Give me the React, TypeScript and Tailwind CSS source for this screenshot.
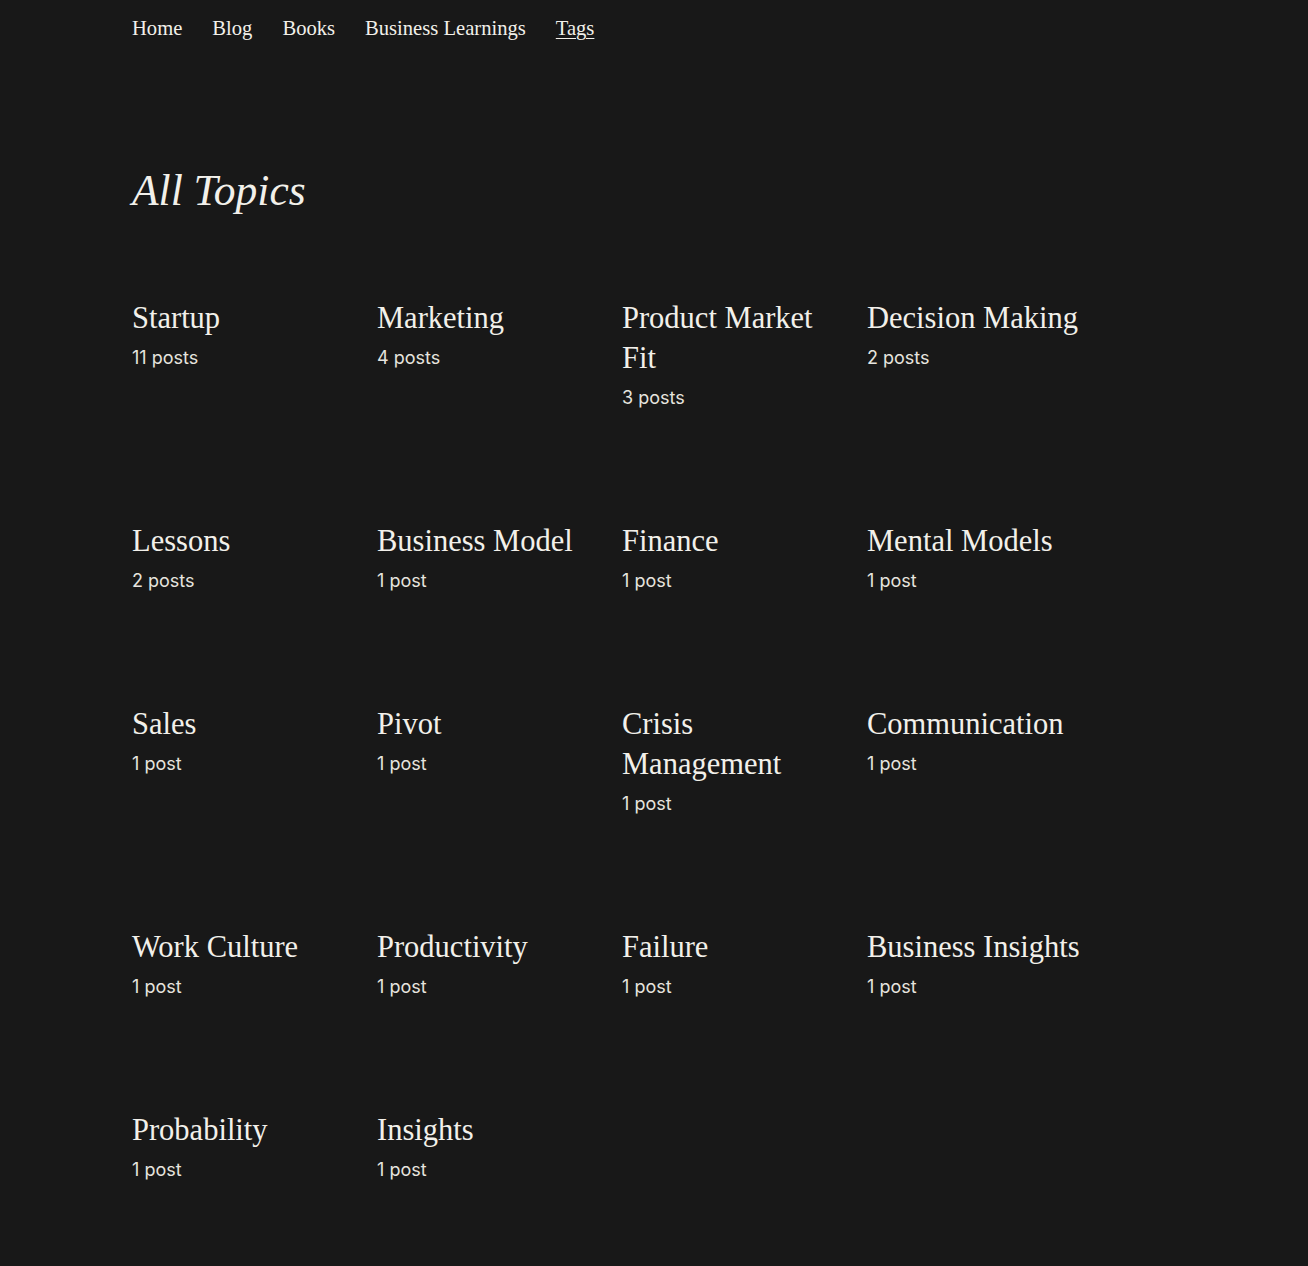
const navItems = ["Home", "Blog", "Books", "Business Learnings", "Tags"];

const topics: { name: string; count: number }[] = [
  { name: "Startup", count: 11 },
  { name: "Marketing", count: 4 },
  { name: "Product Market Fit", count: 3 },
  { name: "Decision Making", count: 2 },
  { name: "Lessons", count: 2 },
  { name: "Business Model", count: 1 },
  { name: "Finance", count: 1 },
  { name: "Mental Models", count: 1 },
  { name: "Sales", count: 1 },
  { name: "Pivot", count: 1 },
  { name: "Crisis Management", count: 1 },
  { name: "Communication", count: 1 },
  { name: "Work Culture", count: 1 },
  { name: "Productivity", count: 1 },
  { name: "Failure", count: 1 },
  { name: "Business Insights", count: 1 },
  { name: "Probability", count: 1 },
  { name: "Insights", count: 1 },
];

const serif = "font-['Liberation_Serif','DejaVu_Serif',serif]";

const App = () => {
  return (
    <div className="min-h-[1266px] w-full bg-[#181818] text-[#f2f0ea]">
      <div className="mx-auto w-[1044px]">
        {/* Nav */}
        <nav className={`flex h-14 items-center gap-[30px] text-[20.6px] ${serif}`}>
          {navItems.map((item) => (
            <a
              key={item}
              href="#"
              className={item === "Tags" ? "underline underline-offset-[3px] decoration-1" : ""}
            >
              {item}
            </a>
          ))}
        </nav>

        {/* Title */}
        <h1 className={`mt-[108px] text-[43.5px] italic leading-[53px] ${serif}`}>All Topics</h1>

        {/* Topics grid */}
        <div className="mt-[81px] grid grid-cols-[repeat(4,221px)] gap-x-6 gap-y-[111px] pb-[86px]">
          {topics.map((t) => (
            <div key={t.name}>
              <h2 className={`text-[30.5px] leading-[40px] ${serif}`}>{t.name}</h2>
              <p className="mt-2 font-['Inter','Liberation_Sans',sans-serif] text-[18px] leading-6 text-[#e6e4df]">
                {t.count} {t.count === 1 ? "post" : "posts"}
              </p>
            </div>
          ))}
        </div>
      </div>
    </div>
  );
};

export default App;
